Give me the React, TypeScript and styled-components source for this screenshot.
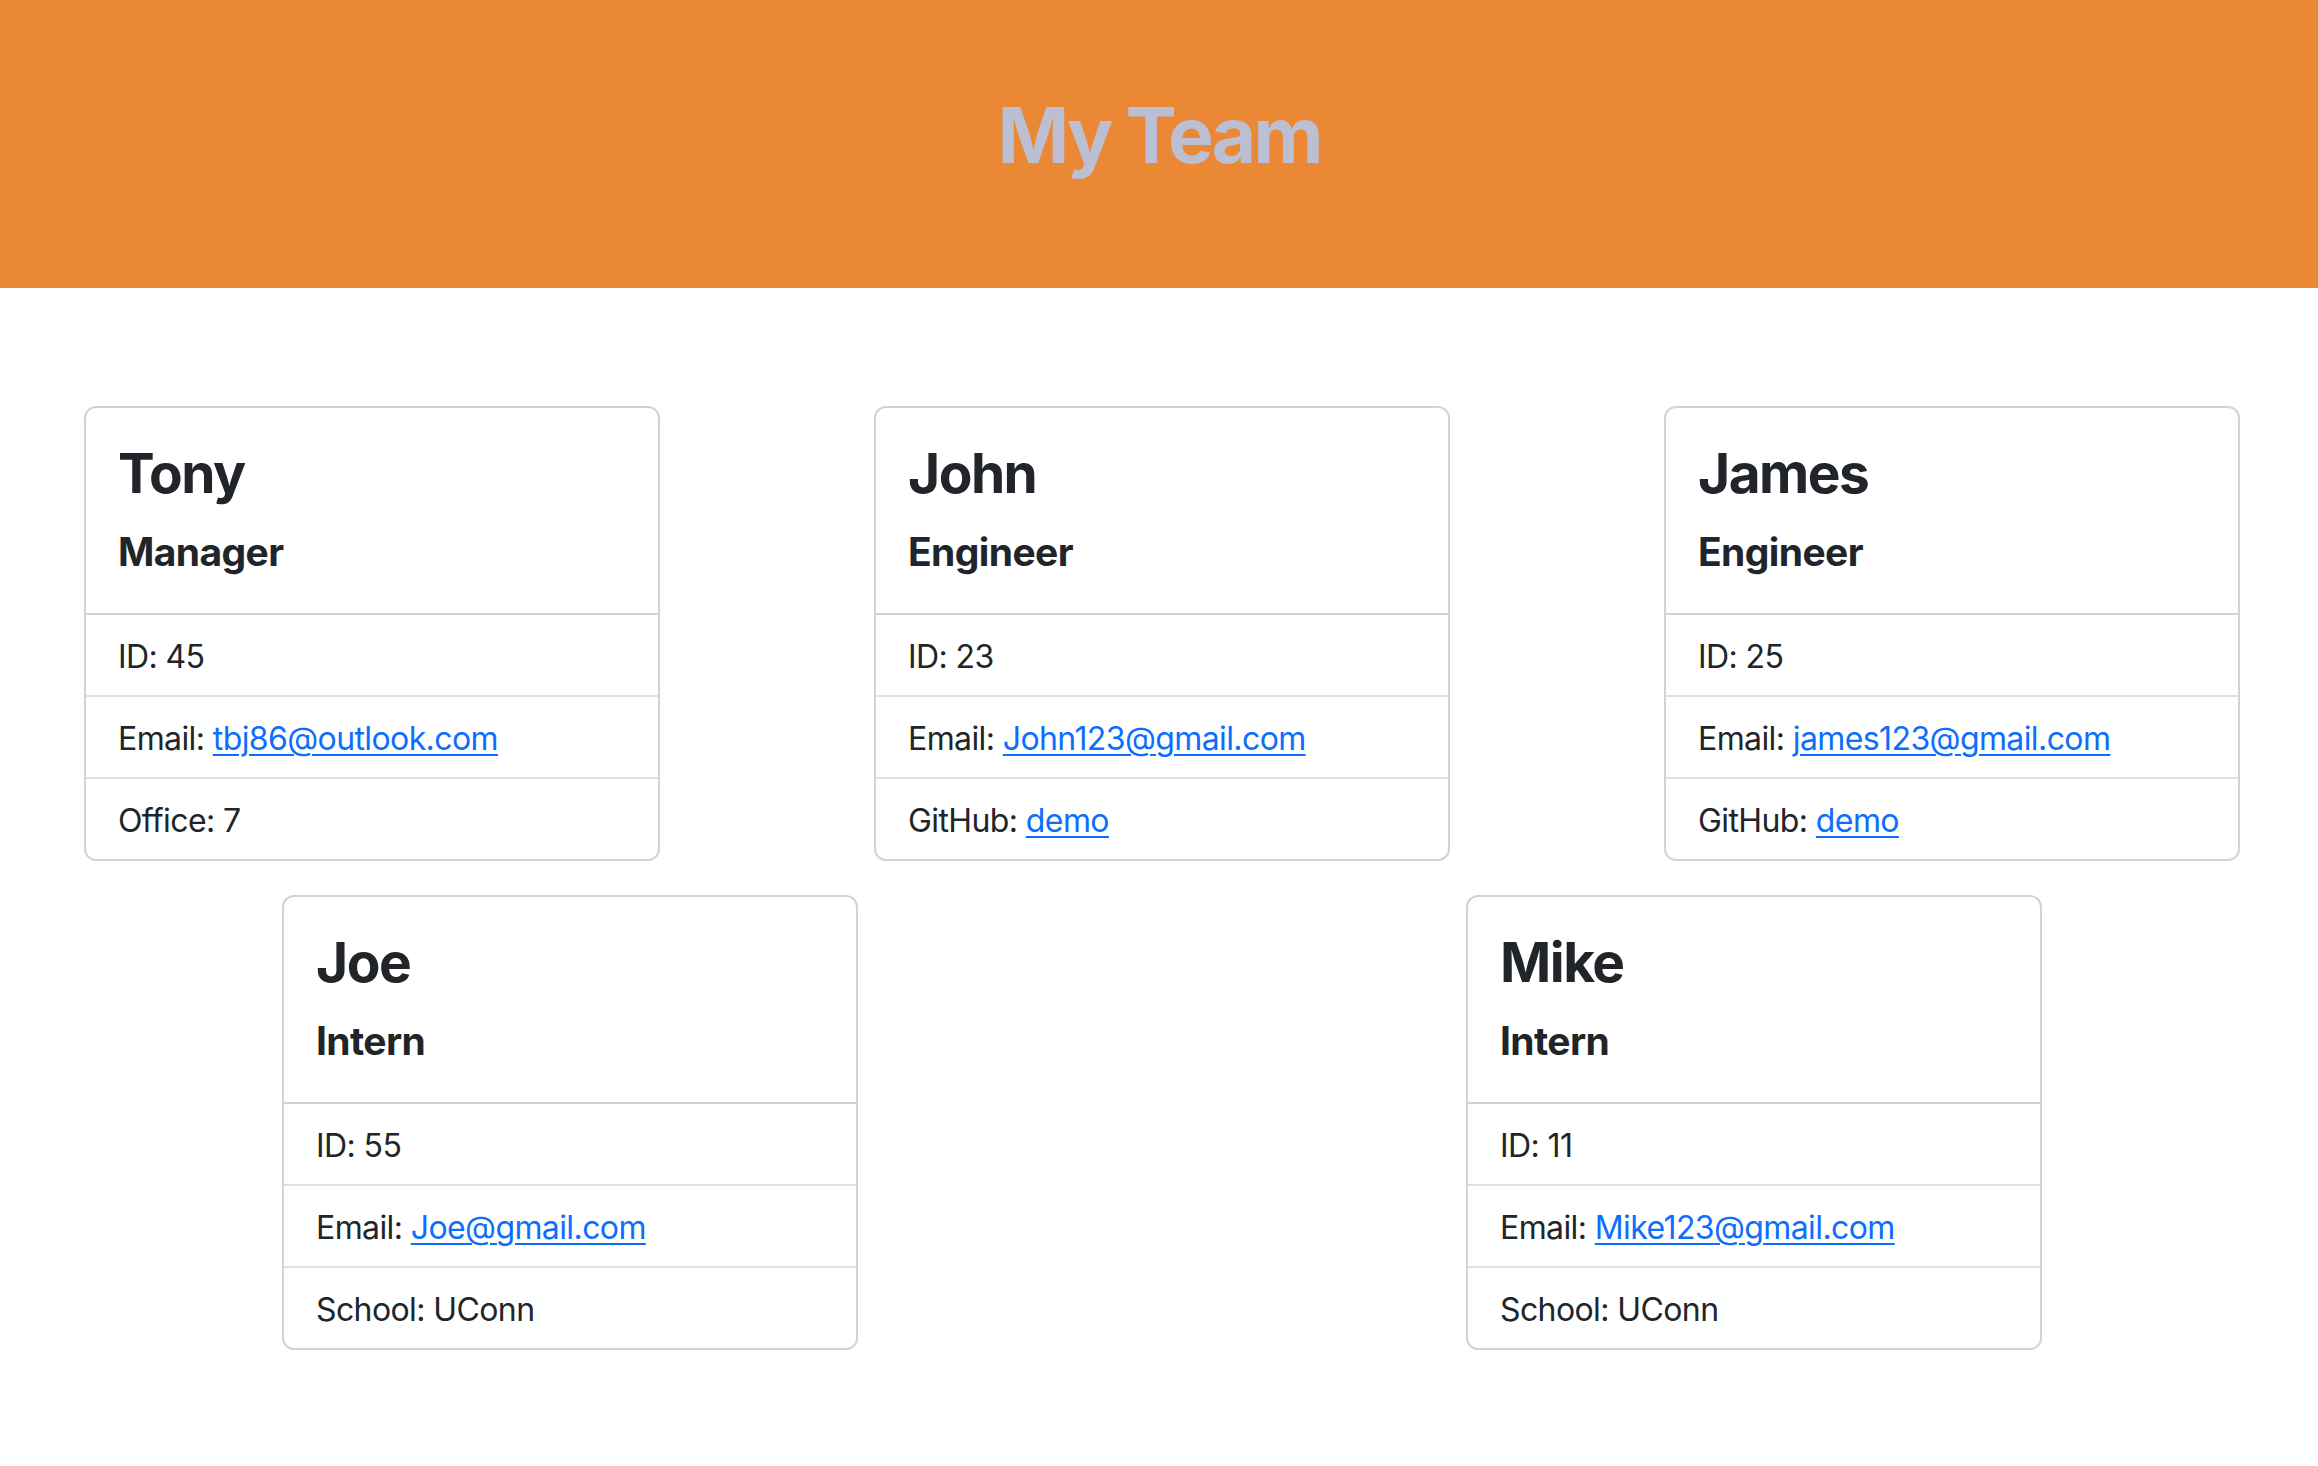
import React from 'react';
import styled, { createGlobalStyle } from 'styled-components';

const GlobalStyle = createGlobalStyle`
	* { box-sizing: border-box; }
	body {
		margin: 0;
		background: #fff;
		color: #212529;
		font-family: Inter, "Noto Sans", "Liberation Sans", sans-serif;
	}
`;

type Detail = { label: string; value: string; href?: string };
type Member = { name: string; role: string; details: Detail[] };

const topRow: Member[] = [
	{
		name: 'Tony',
		role: 'Manager',
		details: [
			{ label: 'ID', value: '45' },
			{ label: 'Email', value: 'tbj86@outlook.com', href: 'mailto:tbj86@outlook.com' },
			{ label: 'Office', value: '7' },
		],
	},
	{
		name: 'John',
		role: 'Engineer',
		details: [
			{ label: 'ID', value: '23' },
			{ label: 'Email', value: 'John123@gmail.com', href: 'mailto:John123@gmail.com' },
			{ label: 'GitHub', value: 'demo', href: '#demo' },
		],
	},
	{
		name: 'James',
		role: 'Engineer',
		details: [
			{ label: 'ID', value: '25' },
			{ label: 'Email', value: 'james123@gmail.com', href: 'mailto:james123@gmail.com' },
			{ label: 'GitHub', value: 'demo', href: '#demo' },
		],
	},
];

const bottomRow: Member[] = [
	{
		name: 'Joe',
		role: 'Intern',
		details: [
			{ label: 'ID', value: '55' },
			{ label: 'Email', value: 'Joe@gmail.com', href: 'mailto:Joe@gmail.com' },
			{ label: 'School', value: 'UConn' },
		],
	},
	{
		name: 'Mike',
		role: 'Intern',
		details: [
			{ label: 'ID', value: '11' },
			{ label: 'Email', value: 'Mike123@gmail.com', href: 'mailto:Mike123@gmail.com' },
			{ label: 'School', value: 'UConn' },
		],
	},
];

const Header = styled.header`
	height: 288px;
	padding-top: 89px;
	background: #eb8836;
	text-align: center;
`;

const Title = styled.h1`
	margin: 0;
	font-size: 77px;
	line-height: 92px;
	font-weight: 700;
	letter-spacing: -3px;
	color: #bcbed1;
`;

const Main = styled.main`
	display: flex;
	flex-direction: column;
	gap: 34px;
	padding: 118px 0 60px 6px;
`;

const Row = styled.div<{ $gap: number }>`
	display: flex;
	justify-content: center;
	gap: ${({ $gap }) => $gap}px;
`;

const Card = styled.div`
	width: 576px;
	background: #fff;
	border: 2px solid #d3d3d4;
	border-radius: 12px;
	overflow: hidden;
`;

const CardBody = styled.div`
	padding: 32px;
	border-bottom: 2px solid #d3d3d4;
`;

const Name = styled.h3`
	margin: 0 0 22px;
	font-size: 55px;
	line-height: 66px;
	font-weight: 700;
	letter-spacing: -1.5px;
`;

const Role = styled.h5`
	margin: 0 0 6px;
	font-size: 39px;
	line-height: 47px;
	font-weight: 700;
	letter-spacing: -0.6px;
`;

const List = styled.ul`
	list-style: none;
	margin: 0;
	padding: 0;
`;

const Item = styled.li`
	padding: 18px 32px 14px;
	font-size: 32px;
	line-height: 48px;
	letter-spacing: -0.6px;
	border-bottom: 2px solid #dee2e6;

	&:last-child {
		border-bottom: none;
	}
`;

const Link = styled.a`
	color: #0d6efd;
	text-decoration: underline;
	text-decoration-thickness: 2px;
	text-underline-offset: 4px;
`;

const MemberCard = ({ member }: { member: Member }) => (
	<Card>
		<CardBody>
			<Name>{member.name}</Name>
			<Role>{member.role}</Role>
		</CardBody>
		<List>
			{member.details.map((d) => (
				<Item key={d.label}>
					{d.label}:{' '}
					{d.href ? <Link href={d.href}>{d.value}</Link> : d.value}
				</Item>
			))}
		</List>
	</Card>
);

export default function App() {
	return (
		<>
			<GlobalStyle />
			<Header>
				<Title>My Team</Title>
			</Header>
			<Main>
				<Row $gap={214}>
					{topRow.map((m) => <MemberCard key={m.name} member={m} />)}
				</Row>
				<Row $gap={608}>
					{bottomRow.map((m) => <MemberCard key={m.name} member={m} />)}
				</Row>
			</Main>
		</>
	);
}
